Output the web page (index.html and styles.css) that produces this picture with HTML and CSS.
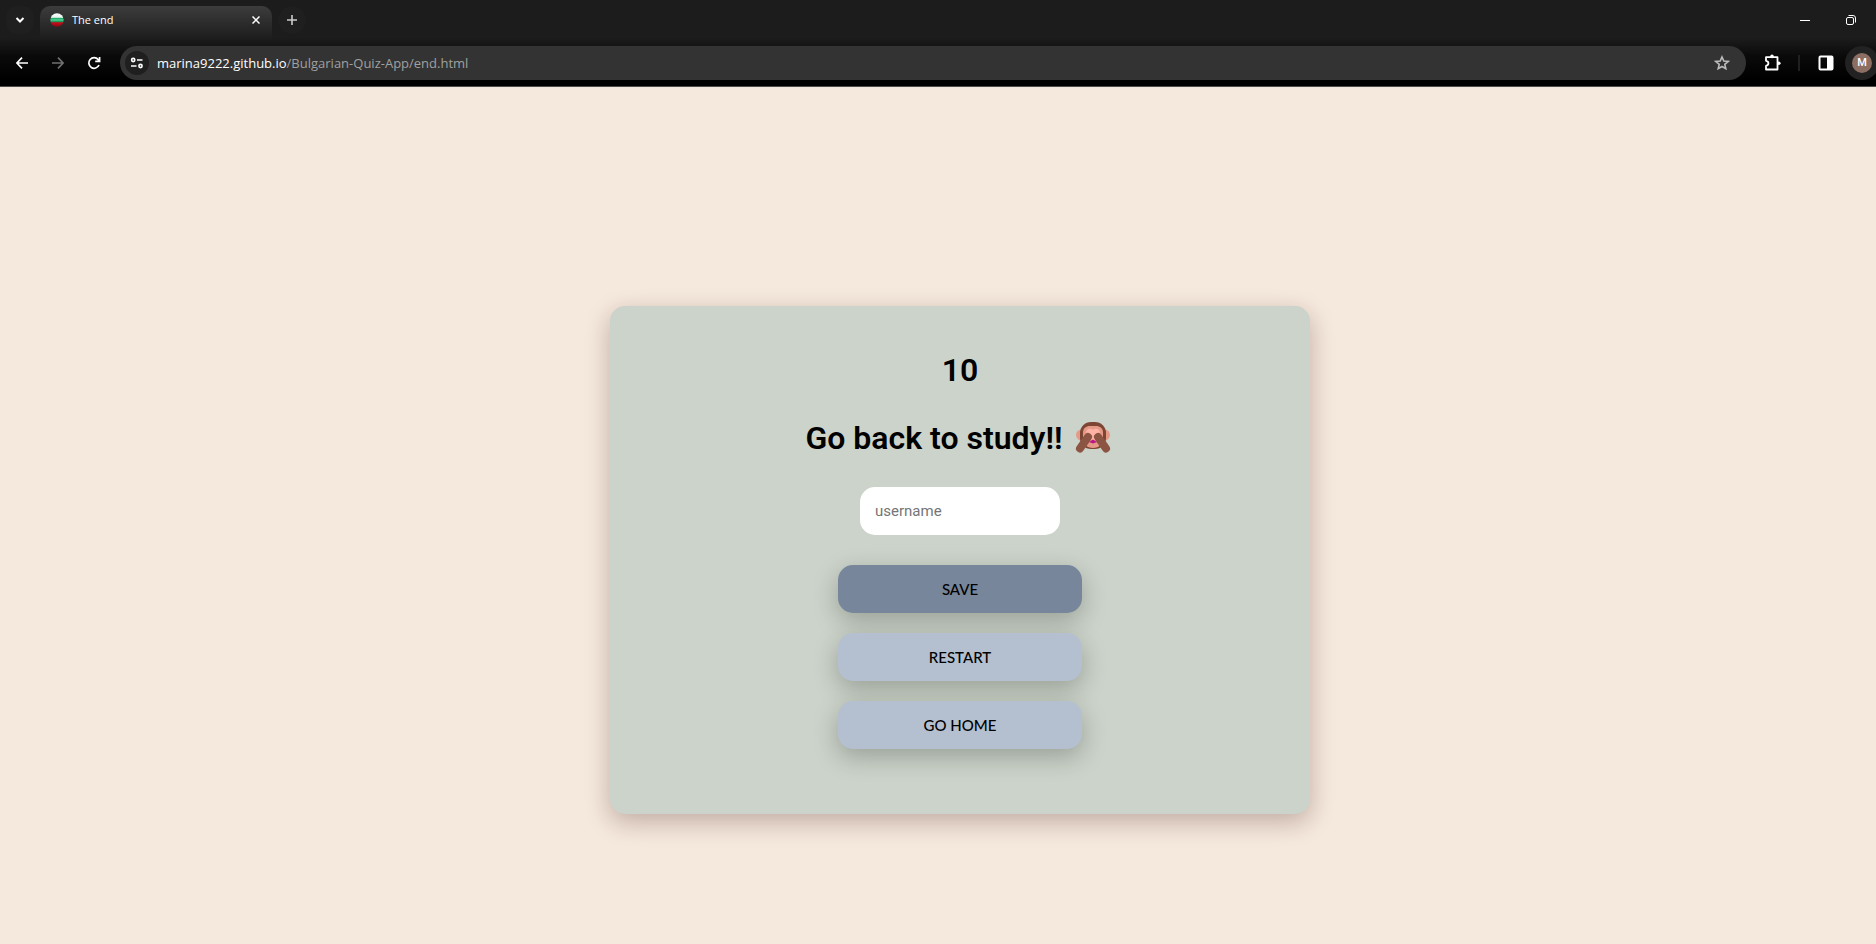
FILE: index.html
```html
<!DOCTYPE html>
<html lang="en">
<head>
<meta charset="utf-8">
<title>The end</title>
<link rel="stylesheet" href="styles.css">
</head>
<body>
<header class="browser">
  <div class="tabstrip">
    <button class="square-btn" aria-label="Search tabs"><svg width="10" height="6" viewBox="0 0 10 6" fill="none" stroke="#fff" stroke-width="2"><path d="M1.500 1L5 4.500 8.500 1"/></svg></button>
    <div class="tab">
      <svg width="14" height="14" viewBox="0 0 14 14"><defs><linearGradient id="flag" x1="0" y1="0" x2="0" y2="1"><stop offset="0" stop-color="#fff"/><stop offset=".3" stop-color="#e9f5ef"/><stop offset=".37" stop-color="#1fa565"/><stop offset=".5" stop-color="#4fd495"/><stop offset=".64" stop-color="#128a4c"/><stop offset=".7" stop-color="#c40f1c"/><stop offset="1" stop-color="#8d0611"/></linearGradient></defs><circle cx="7" cy="7" r="6.700" fill="url(#flag)"/></svg>
      <span class="tab-title">The end</span>
      <button class="tab-close" aria-label="Close tab"><svg width="8" height="8" viewBox="0 0 8 8" stroke="#fff" stroke-width="1.500"><path d="M.5.5l7 7M7.500.5l-7 7"/></svg></button>
    </div>
    <button class="square-btn new-tab" aria-label="New tab"><svg width="10" height="10" viewBox="0 0 10 10" stroke="#ccc" stroke-width="1.600"><path d="M5 0v10M0 5h10"/></svg></button>
    <div class="window-controls">
      <button aria-label="Minimize"><svg width="10" height="10" viewBox="0 0 10 10" stroke="#fff"><path d="M0 5.500h10"/></svg></button>
      <button aria-label="Restore"><svg width="10" height="10" viewBox="0 0 10 10" fill="none" stroke="#fff"><rect x=".5" y="2.500" width="7" height="7" rx="1.500"/><path d="M2.500.5h4.500a2.500 2.500 0 0 1 2.500 2.500v4.500"/></svg></button>
    </div>
  </div>
  <div class="toolbar">
    <nav class="nav-buttons">
      <button aria-label="Back"><svg width="12" height="12" viewBox="0 0 12 12" fill="none" stroke="#fff" stroke-width="1.700"><path d="M12 6H1M6 .7L.9 6 6 11.300"/></svg></button>
      <button aria-label="Forward"><svg width="12" height="12" viewBox="0 0 12 12" fill="none" stroke="#707070" stroke-width="1.700"><path d="M0 6h11M6 .7L11.100 6 6 11.300"/></svg></button>
      <button aria-label="Reload"><svg width="14" height="14" viewBox="0 0 14 14" fill="none" stroke="#fff" stroke-width="1.700"><path d="M12 9A5.300 5.300 0 1 1 11.200 3.600L12.400 5M12.600 1v4.400H8.200"/></svg></button>
    </nav>
    <div class="address">
      <button class="site-info" aria-label="Site information"><svg width="14" height="12" viewBox="0 0 14 12" fill="none" stroke="#fff" stroke-width="1.600"><circle cx="3.200" cy="3" r="1.600"/><path d="M7 3h5.500M1 9h5.500"/><circle cx="10.500" cy="9" r="1.600"/></svg></button>
      <span class="url">marina9222.github.io<span class="path">/Bulgarian-Quiz-App/end.html</span></span>
      <button class="bookmark" aria-label="Bookmark"><svg width="16" height="16" viewBox="0 0 16 16" fill="none" stroke="#bdbdbd" stroke-width="1.600"><path d="M8 2l1.800 4.100 4.300.4-3.300 2.900 1 4.300L8 11.500l-3.800 2.200 1-4.300-3.300-2.900 4.300-.4z"/></svg></button>
    </div>
    <button class="extensions" aria-label="Extensions"><svg width="18" height="18" viewBox="0 0 18 18"><path d="M2 3.200H13.500V15.500H2V11.900c3.200-.5 3.200-4.600 0-5.100z" fill="none" stroke="#fff" stroke-width="1.800" stroke-linejoin="round"/><circle cx="8" cy="2.400" r="1.800" fill="#fff"/><circle cx="14.800" cy="9.300" r="1.800" fill="#fff"/></svg></button>
    <span class="divider"></span>
    <button class="side-panel" aria-label="Side panel"><svg width="16" height="16" viewBox="0 0 16 16"><rect x="1.500" y="1.500" width="13" height="13" rx="1" fill="none" stroke="#fff" stroke-width="2"/><path d="M9 1h6v14H9z" fill="#fff"/></svg></button>
    <button class="profile" aria-label="Profile"><span class="avatar">M</span></button>
  </div>
</header>
<main class="page">
  <section class="card">
    <h1>10</h1>
    <h1 class="message">Go back to study!!
      <svg class="monkey" viewBox="0 0 44 38" role="img" aria-label="See-no-evil monkey">
        <circle cx="10.500" cy="16" r="5.500" fill="#e59a88"/><circle cx="33.500" cy="16" r="5.500" fill="#e59a88"/>
        <rect x="9" y="3" width="26" height="27" rx="11" fill="#7d4533"/>
        <path d="M12 14c0-5 3-7 7-7h6c4 0 7 2 7 7v5c0 6-4 10-10 10s-10-4-10-10z" fill="#e59a88"/>
        <path d="M15 14c0-5 5-5 7-3 2-2 7-2 7 3 0 4-4 7-7 9-3-2-7-5-7-9z" fill="#ffb3a5"/>
        <path d="M18 23l4-2.500 4 2.500-4 1.500z" fill="#bf1685"/>
        <path d="M9 29.500l8-11.500M35 29.500l-8-11.500" stroke="#8c5443" stroke-width="8" stroke-linecap="round"/>
      </svg></h1>
    <form class="score-form">
      <input type="text" id="username" name="username" placeholder="username" aria-label="username">
      <button type="button" class="btn btn-save">Save</button>
      <a class="btn" href="#restart">Restart</a>
      <a class="btn" href="#home">Go home</a>
    </form>
  </section>
</main>
</body>
</html>
```
FILE: styles.css
```css
* { box-sizing: border-box; }

body {
  margin: 0;
  min-height: 100vh;
  display: flex;
  flex-direction: column;
  overflow: hidden;
  background: #f5e8dc;
  font-family: Roboto, sans-serif;
  color: #000;
}

button {
  margin: 0;
  padding: 0;
  border: 0;
  background: none;
  font: inherit;
  display: flex;
  align-items: center;
  justify-content: center;
  flex-shrink: 0;
}

.browser {
  background: linear-gradient(#1c1c1c 0, #1c1c1c 38px, #0a0a0a 56px, #000 80px);
  border-bottom: 1px solid #4b4b4b;
  color: #fff;
  font-family: "Open Sans", "Noto Sans", sans-serif;
}

.tabstrip {
  display: flex;
  align-items: flex-start;
  height: 46px;
  padding: 6px 0 0 6px;
}

.square-btn {
  width: 28px;
  height: 28px;
  border-radius: 10px;
  background: #1f1f1f;
}

.new-tab { margin-left: 6px; border-radius: 14px; }

.tab {
  display: flex;
  align-items: center;
  width: 232px;
  height: 34px;
  margin-left: 6px;
  padding: 0 12px 6px 10px;
  border-radius: 10px 10px 0 0;
  background: linear-gradient(#3c3c3c, #1c1c1c);
}

.tab-title {
  flex: 1;
  margin-left: 8px;
  font-size: 11px;
  line-height: 16px;
}

.window-controls {
  display: flex;
  margin-left: auto;
  padding-right: 2px;
}

.window-controls button { width: 46px; height: 28px; }

.toolbar {
  display: flex;
  align-items: center;
  height: 40px;
  padding-bottom: 6px;
}

.nav-buttons {
  display: flex;
  gap: 8px;
  padding: 0 12px 0 8px;
}

.nav-buttons button { width: 28px; height: 28px; }

.address {
  display: flex;
  flex: 1;
  align-items: center;
  height: 34px;
  padding: 0 16px 0 5px;
  border-radius: 17px;
  background: #333;
}

.site-info {
  width: 24px;
  height: 24px;
  border-radius: 50%;
  background: #1f1f1f;
}

.url {
  flex: 1;
  margin-left: 8px;
  font-size: 13px;
  line-height: 20px;
}

.path { color: #a0a0a0; }

.extensions { margin-left: 18px; }

.divider {
  width: 2px;
  height: 16px;
  margin: 0 18px 0 16px;
  background: #202020;
}

.profile {
  width: 34px;
  height: 34px;
  margin: 0 -3px 0 11px;
  border-radius: 50%;
  background: #222;
}

.avatar {
  width: 20px;
  height: 20px;
  border-radius: 50%;
  background: #8d6e63;
  color: #fff;
  font: 500 11px/20px Roboto, sans-serif;
}

.page {
  flex: 1;
  display: flex;
  align-items: center;
  justify-content: center;
  padding: 89px 0 0 44px;
}

.card {
  display: flex;
  flex-direction: column;
  align-items: center;
  width: 100%;
  max-width: 700px;
  padding: 44px 20px 65px;
  border-radius: 15px;
  background: #ccd3ca;
  box-shadow: 0 8px 24px rgba(50, 15, 15, 0.27);
}

h1 {
  margin: 0 0 28px;
  font-size: 32px;
  font-weight: 600;
  line-height: 40px;
  text-align: center;
}

.monkey {
  width: 44px;
  height: 38px;
  margin-left: -1px;
}

.message {
  display: flex;
  align-items: center;
  gap: 9px;
  margin-bottom: 29px;
}

.score-form {
  display: flex;
  flex-direction: column;
  align-items: center;
  gap: 20px;
}

.score-form input {
  width: 200px;
  height: 48px;
  margin-bottom: 10px;
  padding: 0 15px;
  border: 0;
  border-radius: 15px;
  background: #fff;
  font: 15px Roboto, sans-serif;
}

.score-form input::placeholder { color: #757575; }

.btn {
  display: flex;
  align-items: center;
  justify-content: center;
  width: 244px;
  height: 48px;
  border-radius: 15px;
  background: #b4c0d0;
  box-shadow: 0 8px 24px rgba(20, 25, 15, 0.27);
  color: #000;
  font: 500 15px/20px Lato, sans-serif;
  text-decoration: none;
  text-transform: uppercase;
}

.btn-save { background: #78869b; }
```
